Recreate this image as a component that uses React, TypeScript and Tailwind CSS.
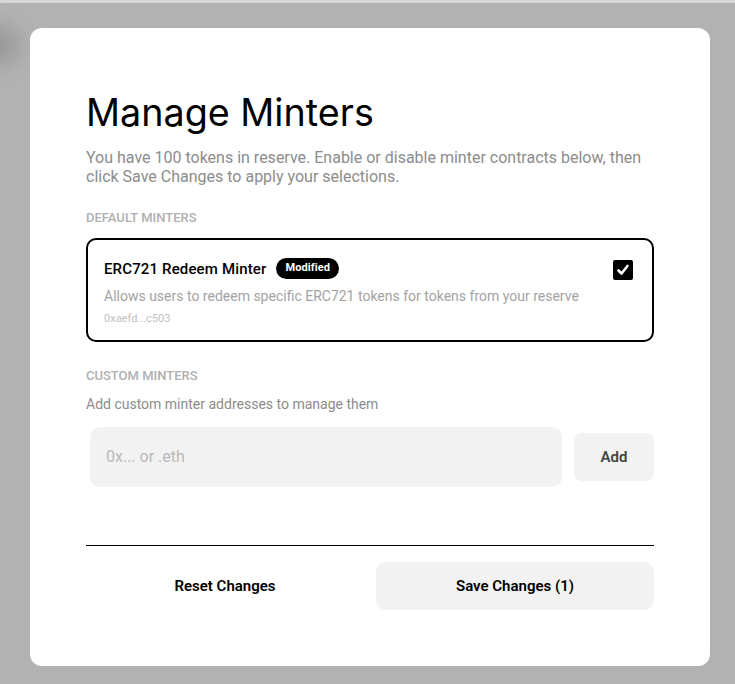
import React from "react";

export default function App() {
  const body = { fontFamily: "Roboto, 'Liberation Sans', sans-serif" };
  return (
    <div className="relative w-[735px] h-[684px] bg-[#b2b2b2] overflow-hidden" style={body}>
      <div className="absolute top-0 left-0 right-0 h-[3px] bg-[#d6d6da]" />
      <div className="absolute left-[-30px] top-[25px] w-[50px] h-[40px] rounded-full bg-[#8a8a8a] blur-[10px] opacity-60" />
      <div className="absolute left-[30px] top-[28px] w-[680px] h-[638px] bg-white rounded-[12px] px-[56px] pt-[61px]">
        <h1 className="text-[37.7px] leading-[46px] text-black" style={{ fontFamily: "Inter, 'Liberation Sans', sans-serif" }}>
          Manage Minters
        </h1>
        <p className="mt-[13px] text-[16px] leading-[19px] text-[#8c8c8c]">
          You have 100 tokens in reserve. Enable or disable minter contracts below, then click Save Changes to apply your selections.
        </p>
        <div className="mt-[24px] text-[13px] leading-[16px] text-[#b0b0b0] font-medium">DEFAULT MINTERS</div>
        <div className="mt-[12px] border-2 border-black rounded-[10px] h-[104px] px-[16px] pt-[18px] flex justify-between">
          <div>
            <div className="flex items-center">
              <span className="text-[15px] leading-[20px] font-medium text-black tracking-[0.15px]">ERC721 Redeem Minter</span>
              <span className="ml-[10px] bg-black text-white text-[11px] font-bold rounded-full px-[9px] h-[21px] flex items-center tracking-[0.1px]">Modified</span>
            </div>
            <div className="mt-[8px] text-[14px] leading-[18px] text-[#a3a3a3]">
              Allows users to redeem specific ERC721 tokens for tokens from your reserve
            </div>
            <div className="mt-[7px] text-[11px] leading-[14px] text-[#c2c2c2]">0xaefd...c503</div>
          </div>
          <div className="mt-[2px] mr-[3px] w-[20px] h-[20px] bg-black rounded-[2px] flex items-center justify-center">
            <svg width="14" height="14" viewBox="0 0 14 14">
              <path d="M2.5 7.5 L5.5 10.5 L11.5 3" stroke="white" strokeWidth="2.6" fill="none" strokeLinecap="round" strokeLinejoin="round" />
            </svg>
          </div>
        </div>
        <div className="mt-[26px] text-[13px] leading-[16px] text-[#b0b0b0] font-medium">CUSTOM MINTERS</div>
        <div className="mt-[11px] text-[14px] leading-[18px] text-[#8c8c8c]">Add custom minter addresses to manage them</div>
        <div className="mt-[14px] flex items-center gap-[12px] pl-[4px]">
          <div className="w-[472px] h-[60px] bg-[#f2f2f2] rounded-[10px] flex items-center px-[16px] text-[16px] text-[#b9b9b9]">
            0x... or .eth
          </div>
          <div className="w-[80px] h-[48px] bg-[#f2f2f2] rounded-[8px] flex items-center justify-center text-[15px] font-semibold text-[#444]">
            Add
          </div>
        </div>
        <div className="mt-[58px] h-px bg-black" />
        <div className="mt-[16px] flex gap-[12px]">
          <div className="flex-1 h-[48px] flex items-center justify-center text-[15px] font-semibold text-black">Reset Changes</div>
          <div className="flex-1 h-[48px] bg-[#f2f2f2] rounded-[10px] flex items-center justify-center text-[15px] font-semibold text-black">
            Save Changes (1)
          </div>
        </div>
      </div>
    </div>
  );
}
